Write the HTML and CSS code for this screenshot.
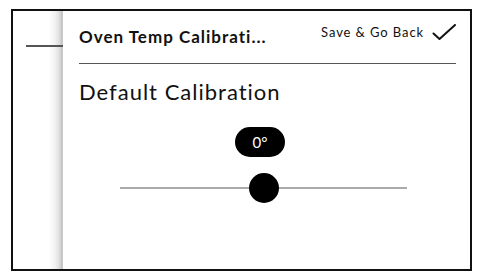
FILE: index.html
```html
<!DOCTYPE html>
<html>
<head>
<meta charset="utf-8">
<link rel="stylesheet" href="styles.css">
</head>
<body>
<div class="frame">
  <div class="side"><div class="side-line"></div></div>
  <div class="main">
    <div class="header">
      <div class="title">Oven Temp Calibrati...</div>
      <div class="save">
        <span class="save-text">Save &amp; Go Back</span>
        <svg class="check" width="24" height="16" viewBox="0 0 24 16"><path d="M1.5 9.5 L7.5 15 L23 1" fill="none" stroke="#111" stroke-width="2" stroke-linecap="round" stroke-linejoin="round"/></svg>
      </div>
    </div>
    <div class="section-title">Default Calibration</div>
    <div class="slider">
      <div class="pill">0°</div>
      <div class="track"><div class="thumb"></div></div>
    </div>
  </div>
</div>
</body>
</html>
```
FILE: styles.css
```css
html, body { margin: 0; padding: 0; background: #fff; }
body { font-family: "Lato", "Liberation Sans", sans-serif; color: #111; }
.frame {
  margin: 9px 0 0 11px;
  width: 461px;
  height: 262px;
  box-sizing: border-box;
  border: 2px solid #111;
  display: flex;
}
.side {
  width: 50px;
  background: linear-gradient(to right, #fff 0, #fff 36px, #f2f2f2 42px, #e0e0e0 46px, #cfcfcf 48px, #bdbdbd 49px, #d6d6d6 50px);
  padding-top: 34px;
  box-sizing: border-box;
}
.side-line { margin-left: 13px; height: 2px; background: #555; }
.main { flex: 1; padding: 0 14px 0 16px; display: flex; flex-direction: column; }
.header {
  height: 52px;
  border-bottom: 1px solid #555;
  display: flex;
  justify-content: space-between;
  align-items: flex-start;
}
.title { margin-top: 16px; font-size: 17px; line-height: 20px; font-weight: 700; letter-spacing: 1px; }
.save { margin-top: 13px; display: flex; align-items: center; gap: 8px; }
.save-text { font-size: 13px; line-height: 16px; letter-spacing: 0.9px; }
.check { display: block; }
.section-title { margin-top: 15px; font-size: 22px; line-height: 26px; font-weight: 400; letter-spacing: 1px; }
.slider { margin-left: 41px; width: 287px; margin-top: 22px; }
.pill {
  margin-left: 115px;
  width: 50px; height: 30px; border-radius: 15px;
  background: #000; color: #fff;
  font-size: 15px; line-height: 30px; text-align: center;
}
.track { margin-top: 30px; height: 2px; background: #aaa; position: relative; }
.thumb {
  position: absolute; left: 129px; top: -14px;
  width: 30px; height: 30px; border-radius: 50%; background: #000;
}
```
